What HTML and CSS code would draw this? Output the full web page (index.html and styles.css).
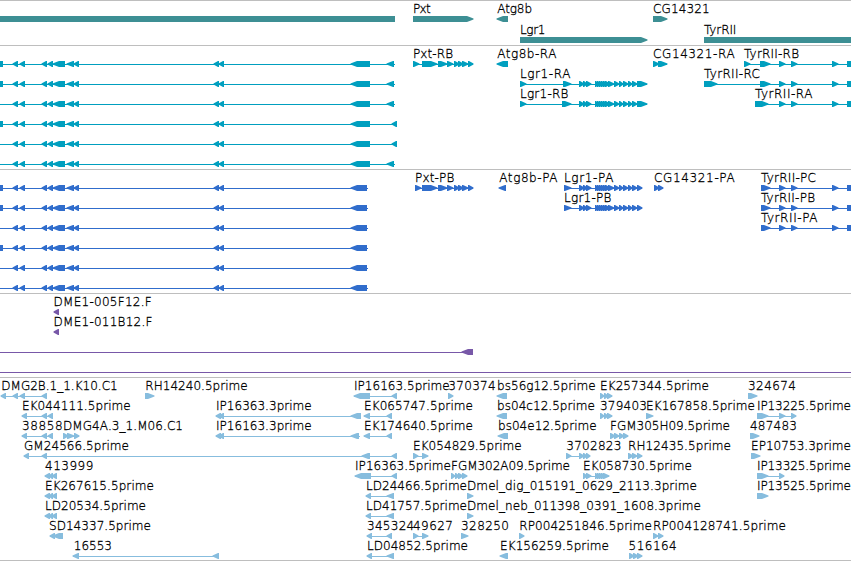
FILE: index.html
```html
<!DOCTYPE html>
<html lang="en">
<head>
    <meta charset="UTF-8">
    <title>Genome Browser</title>
    <link rel="stylesheet" href="styles.css">
</head>
<body>
    <div class="browser">
        <div class="track genes"><svg id="genes"></svg></div>
        <div class="track transcripts"><svg id="transcripts"></svg></div>
        <div class="track cds"><svg id="cds"></svg></div>
        <div class="track bacs"><svg id="bacs"></svg></div>
        <div class="track ests"><svg id="ests"></svg></div>
    </div>
    <script src="tracks.js"></script>
</body>
</html>
```
FILE: styles.css
```css
body {
    margin: 0;
    background-color: #fff;
    overflow: hidden;
}

.browser {
    width: 851px;
    height: 561px;
    box-sizing: border-box;
    border-bottom: 1px solid #bebebe;
    display: flex;
    flex-direction: column;
}

.track {
    box-sizing: border-box;
    border-top: 1px solid #bebebe;
}

.track svg {
    display: block;
    width: 100%;
    height: 100%;
}

.track text {
    font-family: "DejaVu Sans", sans-serif;
    font-size: 12px;
    font-weight: 200;
    fill: #000;
    stroke: #000;
    stroke-width: 0.3px;
}

.genes {
    height: 45px;
    fill: #3d8f94;
}

.transcripts {
    height: 124px;
    fill: #009fbf;
}

.cds {
    height: 124px;
    fill: #306dcc;
}

.bacs {
    height: 84px;
    fill: #7858a8;
}

.ests {
    height: 183px;
    fill: #87bdde;
}
```
FILE: tracks.js
```js
const NS = 'http://www.w3.org/2000/svg';

// feature: [row, strand, exons, label, labelStart, labelEnd, lineEnd]
const longExons = [[13, 18], [20, 25], [42, 47], [48, 53], [53, 65], [67, 74], [74, 79], [214, 219], [219, 224]];
const longStart = [true, true, false, true, false, false];
const pxt = [[422, 437], [438, 447], [447, 453], [454, 459], [458, 463], [462, 468], [468, 473]];
const lgr = [[579, 584], [583, 587], [586, 591], [595, 599], [597, 601], [599, 603], [601, 605], [603, 608], [605, 610], [608, 614],
    [614, 619], [619, 623], [623, 628], [628, 632], [632, 637]];
const tyr = [[779, 785], [791, 797], [832, 838], [847, 870]];
const triple = [[600, 604], [604, 608], [607, 612]];
const left = [[45, 50], [49, 53], [52, 57]];

function longRows(ends) {
    return ends.map((end, row) => {
        const first = longStart[row] ? [-20, 3] : [-20, -10];
        return [row, -1, [first].concat(longExons, end.exons), '', 0, 0, end.line];
    });
}

const far = { exons: [[351, 370], [387, 394]], line: 395 };
const farther = { exons: [[351, 370], [392, 397]], line: 397 };
const coding = { exons: [[351, 367]], line: 368 };

const tracks = {
    genes: [
        [0, -1, [[-20, 395]]],
        [0, 1, [[413, 473]], 'Pxt', 413.7, 430],
        [0, -1, [[497, 508]], 'Atg8b', 498, 531.3],
        [1, 1, [[520, 647]], 'Lgr1', 520.7, 544.7],
        [0, 1, [[653, 667]], 'CG14321', 653.7, 709],
        [1, 1, [[704, 870]], 'TyrRII', 704.6, 735.7]
    ],
    transcripts: longRows([far, far, far, farther, farther, far]).concat([
        [0, 1, [[413, 419]].concat(pxt), 'Pxt-RB', 413.7, 452.3],
        [0, -1, [[497, 508]], 'Atg8b-RA', 498, 555.7],
        [1, 1, [[520, 526], [563, 571]].concat(lgr, [[637, 647]]), 'Lgr1-RA', 520.7, 569.7],
        [2, 1, [[520, 526], [562, 571]].concat(lgr, [[637, 647]]), 'Lgr1-RB', 520.7, 567.7],
        [0, 1, [[653, 659], [658, 667]], 'CG14321-RA', 653.7, 734],
        [0, 1, [[744, 750], [760, 770]].concat(tyr), 'TyrRII-RB', 744.6, 798.3],
        [1, 1, [[704, 717], [760, 770]].concat(tyr), 'TyrRII-RC', 704.6, 759.3],
        [2, 1, [[755, 768]].concat(tyr), 'TyrRII-RA', 755.6, 811.7]
    ]),
    cds: longRows([coding, coding, coding, coding, coding, coding]).concat([
        [0, 1, [[415, 421]].concat(pxt), 'Pxt-PB', 415.7, 453.7],
        [0, -1, [[499, 506]], 'Atg8b-PA', 500, 556.7],
        [0, 1, [[564, 571]].concat(lgr, [[637, 642]]), 'Lgr1-PA', 564.7, 612.7],
        [1, 1, [[564, 571]].concat(lgr, [[637, 642]]), 'Lgr1-PB', 564.7, 610.7],
        [0, 1, [[654, 659], [658, 663]], 'CG14321-PA', 654.7, 734],
        [0, 1, [[761, 770]].concat(tyr), 'TyrRII-PC', 761.6, 815.3],
        [1, 1, [[761, 770]].concat(tyr), 'TyrRII-PB', 761.6, 814.3],
        [2, 1, [[761, 770]].concat(tyr), 'TyrRII-PA', 761.6, 816.7]
    ]),
    bacs: [
        [0, -1, [[54, 59]], 'DME1-005F12.F', 54.3, 151],
        [1, -1, [[54, 59]], 'DME1-011B12.F', 54.3, 151.7],
        [2, -1, [[-20, -10], [462, 473]]],
        [3, -1, [[-20, -10], [860, 870]]]
    ],
    ests: [
        [0, -1, [[1, 6], [13, 18], [20, 25], [42, 47]], 'DMG2B.1_1.K10.C1', 2, 117],
        [0, 1, [[145, 154]], 'RH14240.5prime', 146, 247],
        [0, -1, [[354, 370], [392, 397]], 'IP16163.5prime', 354.7, 449],
        [0, 1, [[448, 453]], '370374', 449, 495],
        [0, -1, [[497, 507]], 'bs56g12.5prime', 497.7, 595],
        [0, 1, triple, 'EK257344.5prime', 600.7, 708.3],
        [0, 1, [[748, 757]], '324674', 748.7, 795.3],

        [1, -1, [[22, 27], [42, 47], [48, 53]], 'EK044111.5prime', 22.7, 130],
        [1, -1, [[216, 221], [219, 224], [351, 361]], 'IP16363.3prime', 216.7, 311],
        [1, -1, [[364, 370], [387, 392]], 'EK065747.5prime', 364.7, 472.3],
        [1, -1, [[497, 507]], 'bs04c12.5prime', 497.7, 594.3],
        [1, 1, triple, '379403', 600.7, 646.3],
        [1, 1, [[646, 653]], 'EK167858.5prime', 646.7, 754.3],
        [1, 1, [[757, 768], [779, 785], [791, 796]], 'IP13225.5prime', 757.7, 850.3],

        [2, -1, [[22, 27], [42, 47], [48, 53]], '38858', 22.7, 62],
        [2, 1, [[63, 68], [67, 74], [74, 79]], 'DMG4A.3_1.M06.C1', 63.7, 182.3],
        [2, -1, [[216, 221], [219, 224], [351, 359]], 'IP16163.3prime', 216.7, 311, 360],
        [2, -1, [[364, 370], [387, 392]], 'EK174640.5prime', 364.7, 472.3],
        [2, -1, [[498, 508]], 'bs04e12.5prime', 498.7, 596],
        [2, 1, [[610, 615], [614, 619], [619, 624], [623, 628]], 'FGM305H09.5prime', 610.7, 729.3],
        [2, 1, [[750, 759]], '487483', 750.7, 796.3],

        [3, -1, [[24, 29], [42, 47], [362, 370], [392, 397]], 'GM24566.5prime', 24.7, 128.3],
        [3, 1, [[413, 418], [422, 428]], 'EK054829.5prime', 413.7, 521],
        [3, 1, [[566, 571], [579, 584], [583, 587], [586, 590]], '3702823', 567, 620.7],
        [3, 1, [[628, 633], [632, 637], [637, 642]], 'RH12435.5prime', 628.7, 730.3],
        [3, 1, [[751, 760]], 'EP10753.3prime', 751.7, 850.3],

        [4, -1, left, '413999', 45.7, 92.7],
        [4, -1, [[355, 371], [392, 397]], 'IP16363.5prime', 355.7, 450.3],
        [4, 1, [[451, 455], [455, 459], [458, 463], [462, 467]], 'FGM302A09.5prime', 451.7, 569.3],
        [4, 1, [[583, 587], [586, 591], [595, 599], [597, 601], [599, 603], [601, 605], [603, 609]], 'EK058730.5prime', 583.7, 691.3],
        [4, 1, [[757, 768], [779, 784]], 'IP13325.5prime', 757.7, 850.3],

        [5, -1, left, 'EK267615.5prime', 45.7, 153.3],
        [5, -1, [[366, 371], [387, 394]], 'LD24466.5prime', 366.7, 466.3],
        [5, 1, [[467, 473]], 'Dmel_dig_015191_0629_2113.3prime', 467.7, 696.3],
        [5, 1, [[757, 768]], 'IP13525.5prime', 757.7, 850.3],

        [6, -1, left, 'LD20534.5prime', 45.7, 145.3],
        [6, -1, [[366, 371], [387, 394]], 'LD41757.5prime', 366.7, 466.3],
        [6, 1, [[467, 473]], 'Dmel_neb_011398_0391_1608.3prime', 467.7, 700.3],

        [7, -1, [[50, 55], [53, 63]], 'SD14337.5prime', 49.7, 150.3],
        [7, -1, [[367, 372], [387, 392]], '345324', 367.7, 413.5],
        [7, 1, [[413, 418], [422, 428]], '49627', 413.7, 452.3],
        [7, 1, [[461, 468]], '328250', 461.7, 508.3],
        [7, 1, [[519, 524]], 'RP004251846.5prime', 520, 651.3],
        [7, 1, [[653, 658], [658, 663]], 'RP004128741.5prime', 653.7, 785.3],

        [8, -1, [[73, 79], [213, 219]], '16553', 74.5, 111.3],
        [8, -1, [[367, 372], [387, 394]], 'LD04852.5prime', 367.7, 467.3],
        [8, -1, [[500, 508]], 'EK156259.5prime', 500.7, 608.3],
        [8, 1, [[629, 634], [633, 638], [637, 642]], '516164', 629.3, 676]
    ]
};

function add(svg, name, attrs) {
    const el = document.createElementNS(NS, name);
    for (const key in attrs) {
        el.setAttribute(key, attrs[key]);
    }
    svg.appendChild(el);
    return el;
}

// Exon box with a blunt pointed end on the side of its strand
function exonPath(x1, x2, y, strand) {
    const head = Math.min(x2 - x1 - 1, 6);
    if (strand > 0) {
        return `M${x1} ${y}H${x2 - head}L${x2 + 0.5} ${y + 2.4}V${y + 3.6}L${x2 - head} ${y + 6}H${x1}Z`;
    }
    return `M${x2} ${y}H${x1 + head}L${x1 - 0.5} ${y + 2.4}V${y + 3.6}L${x1 + head} ${y + 6}H${x2}Z`;
}

for (const id in tracks) {
    const svg = document.getElementById(id);
    const rowHeight = id === 'genes' ? 21 : 20;

    tracks[id].forEach(([row, strand, exons, label, start, end, lineEnd]) => {
        const top = row * rowHeight;
        const x1 = exons[0][0];
        const x2 = lineEnd || exons[exons.length - 1][1];

        if (exons.length > 1) {
            add(svg, 'rect', { x: x1, y: top + 18, width: x2 - x1, height: 1 });
        }
        exons.forEach(([a, b]) => add(svg, 'path', { d: exonPath(a, b, top + 15, strand) }));

        if (label) {
            const text = add(svg, 'text', { x: start - 0.7, y: top + 12, textLength: end - start + 1.4 });
            text.textContent = label;
        }
    });
}
```
